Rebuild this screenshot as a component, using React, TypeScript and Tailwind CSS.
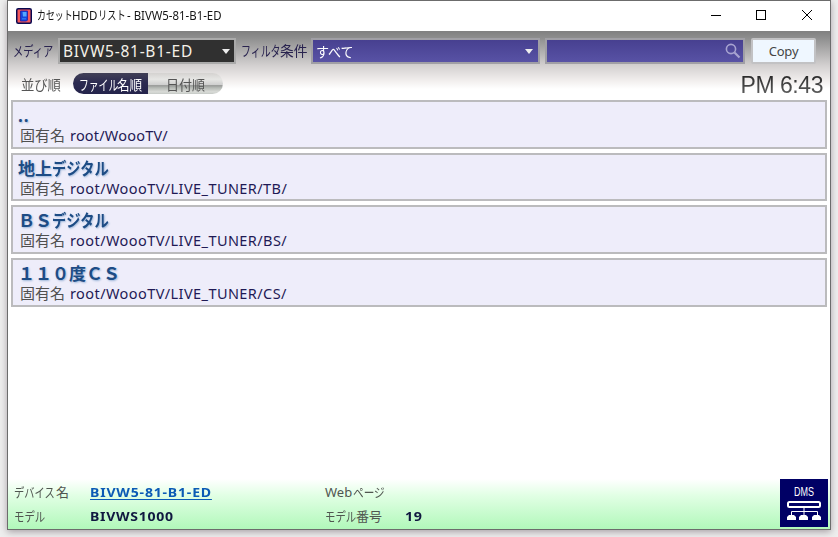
import React from "react";

const JP = "font-['Noto_Sans','Noto_Sans_CJK_JP',sans-serif]";

/* Horizontally scaled run of glyphs, laid out in a box of its final width. */
function Kana({ box, scale, children }: { box: string; scale: string; children: React.ReactNode }) {
  return (
    <span className={`inline-block shrink-0 ${box}`}>
      <span className={`inline-block origin-left whitespace-nowrap ${scale}`}>{children}</span>
    </span>
  );
}

const rows = [
  { head: "..", kana: "", path: "root/WoooTV/", size: "h-[49px]", headStyle: "tracking-[1px]", tracking: "tracking-[0.2px]" },
  { head: "地上", kana: "デジタル", path: "root/WoooTV/LIVE_TUNER/TB/", size: "h-[48px]", headStyle: "", tracking: "tracking-[0.42px]" },
  { head: "ＢＳ", kana: "デジタル", path: "root/WoooTV/LIVE_TUNER/BS/", size: "h-[49px]", headStyle: "", tracking: "tracking-[0.42px]" },
  { head: "１１０度ＣＳ", kana: "", path: "root/WoooTV/LIVE_TUNER/CS/", size: "h-[49px]", headStyle: "", tracking: "tracking-[0.42px]" },
];

function AppIcon() {
  return (
    <svg className="h-4 w-4 shrink-0" viewBox="0 0 16 16">
      <rect x="0.75" y="0.75" width="14.5" height="14.5" rx="1.5" fill="#f4585c" stroke="#080850" strokeWidth="1.5" />
      <path d="M4.500 3h7v9l-1 1h-6z" fill="#1646dc" stroke="#2020a8" strokeWidth="0.8" />
      <path d="M6.500 4h4v4.500H7z" fill="#55a7ff" />
      <path d="M6 10h4v1.5H6z" fill="#2a72f5" />
    </svg>
  );
}

function TitleBar() {
  return (
    <header className="flex h-[30px] shrink-0 items-center bg-white pl-2">
      <AppIcon />
      <div className={`ml-[5px] flex text-[12px] whitespace-nowrap text-[#151515] ${JP}`}>
        <Kana box="w-[35px]" scale="scale-x-[0.74]">カセット</Kana>
        <Kana box="w-[26px]" scale="scale-x-[0.96]">HDD</Kana>
        <Kana box="w-[29px]" scale="scale-x-[0.77]">リスト</Kana>
        <Kana box="w-[100px]" scale="scale-x-[0.95]">- BIVW5-81-B1-ED</Kana>
      </div>
      <svg className="ml-auto mr-[16px] h-3 w-[104px]" viewBox="0 0 104 12" fill="none" stroke="#000" shapeRendering="crispEdges">
        <path d="M1 5.5h10" />
        <rect x="46.5" y="0.5" width="9" height="9" />
        <path d="M92 0l10 10M102 0L92 10" shapeRendering="auto" />
      </svg>
    </header>
  );
}

function Toolbar() {
  return (
    <section className="flex h-[69px] shrink-0 flex-col bg-linear-[180deg,#808080_0px,#8c8c8c_6px,#d2cfcf_34px,#f2efee_50px,#fff_58px]">
      <div className="flex pt-[7px] pl-[5px]">
        <div className={`w-[45px] text-[14px] leading-[26px] text-[#29234f] ${JP}`}>
          <Kana box="w-[41px]" scale="scale-x-[0.73]">メディア</Kana>
        </div>
        <div className="flex h-[26px] w-[178px] items-center justify-between border-2 border-[#aaa] bg-[#303030] pr-[4px] pl-[3px]">
          <span className={`pt-px text-[15.5px] tracking-[0.75px] whitespace-nowrap text-[#f4f0e8] ${JP}`}>BIVW5-81-B1-ED</span>
          <svg className="h-[5px] w-2" viewBox="0 0 8 5"><path d="M0 0h8L4 5z" fill="#eee" /></svg>
        </div>
        <div className={`ml-[5px] flex w-[70px] text-[14px] leading-[26px] whitespace-nowrap text-[#29234f] ${JP}`}>
          <Kana box="w-[39px]" scale="scale-x-[0.71]">フィルタ</Kana>
          <Kana box="w-[28px]" scale="scale-x-[0.98]">条件</Kana>
        </div>
        <div className="flex h-[26px] w-[229px] items-center justify-between border-2 border-[#a09fa5] bg-linear-[180deg,#474090,#5852a5] pr-[5px] pl-[3px]">
          <span className={`text-[14px] text-white ${JP}`}><Kana box="w-[38px]" scale="scale-x-[0.93]">すべて</Kana></span>
          <svg className="h-[5px] w-2" viewBox="0 0 8 5"><path d="M0 0h8L4 5z" fill="#eee" /></svg>
        </div>
        <div className="ml-[5px] flex h-[26px] w-[200px] items-center justify-end border-2 border-[#a09fa5] bg-linear-[180deg,#474090,#5852a5] pr-[2px]">
          <svg className="h-4 w-4" viewBox="0 0 16 16" fill="none" stroke="#a7a3d0">
            <circle cx="6" cy="6" r="4.6" strokeWidth="1.6" />
            <path d="M9.5 9.5l5 5" strokeWidth="2.2" />
          </svg>
        </div>
        <button className={`ml-[6px] h-[26px] w-[65px] rounded-[2px] border-2 border-[#c2c2c4] bg-[#eff7ff] text-[13px] leading-[22px] tracking-[-0.2px] text-[#454545] ${JP}`}>Copy</button>
      </div>
      <div className="flex h-[34px] items-start pt-[9px] pl-[13px]">
        <div className={`w-[52px] text-[14px] leading-[23px] text-[#555] ${JP}`}>
          <Kana box="w-[41px]" scale="scale-x-[0.95]">並び順</Kana>
        </div>
        <div className={`flex h-[21px] w-[150px] overflow-hidden rounded-full text-[14px] leading-[23px] whitespace-nowrap ${JP}`}>
          <div className="flex w-[75px] bg-linear-[180deg,#414056,#2c2b51_45%,#24234b] pl-[6px] text-white">
            <Kana box="w-[38px]" scale="scale-x-[0.7]">ファイル</Kana>
            <Kana box="w-[25px]" scale="scale-x-[0.9]">名順</Kana>
          </div>
          <div className="w-[75px] bg-linear-[180deg,#d4d2d0,#e6e6e4_30%,#d0d0d0_55%,#989a98_60%,#b4b8b4_70%,#dadcd8_90%,#c4c8c4] pl-[18px] text-[#555]">
            <Kana box="w-[39px]" scale="scale-x-[0.93]">日付順</Kana>
          </div>
        </div>
        <span className="mr-[7px] ml-auto bg-linear-[180deg,#222,#666] bg-clip-text font-['Liberation_Sans',sans-serif] text-[23px] leading-[24px] tracking-[-0.45px] whitespace-nowrap text-transparent">PM 6:43</span>
      </div>
    </section>
  );
}

function FileList() {
  return (
    <main className="flex flex-1 flex-col gap-1 pr-[3px] pl-[3px]">
      {rows.map((row) => (
        <article key={row.path} className={`${row.size} ${JP} shrink-0 border-2 border-[#bbbbbd] bg-[#eeedfa] pt-[3px] pl-[5px] whitespace-nowrap`}>
          <h2 className="flex h-[21px] text-[17px] leading-[21px] font-bold text-[#1d4c85] [text-shadow:1px_1px_2px_#9db6d8]">
            <span className={row.headStyle}>{row.head}</span>
            {row.kana && <Kana box="w-[57px]" scale="scale-x-[0.84]">{row.kana}</Kana>}
          </h2>
          <div className="flex pl-[2px] leading-[18px]">
            <span className="w-[50px] text-[15px] text-[#505050]">固有名</span>
            <span className={`text-[14.5px] text-[#1f1a55] ${row.tracking}`}>{row.path}</span>
          </div>
        </article>
      ))}
    </main>
  );
}

function DmsLogo() {
  return (
    <svg className="mt-[-1px] mr-[2px] h-12 w-12" viewBox="0 0 48 48">
      <rect width="48" height="48" fill="#000065" />
      <text x="14" y="16.5" fill="#fff" fontSize="12" fontFamily="Liberation Sans, sans-serif" textLength="20" lengthAdjust="spacingAndGlyphs">DMS</text>
      <rect x="8" y="23" width="32" height="5" rx="1.5" fill="none" stroke="#fff" strokeWidth="2" />
      <path d="M24 28v8M11.500 36v-3.500h26v3.500" fill="none" stroke="#fff" />
      <path d="M7 41v-3l2-2h5l2 2v3zM19 41v-3l2-2h5l2 2v3zM32 41v-3l2-2h5l2 2v3z" fill="#fff" />
    </svg>
  );
}

function Footer() {
  return (
    <footer className={`flex h-[50px] shrink-0 bg-linear-[180deg,#fff_0%,#e2ffe5_32%,#b1f8ba_100%] pt-px pl-[6px] text-[13px] leading-[24px] whitespace-nowrap text-[#505650] ${JP}`}>
      <div className="w-[76px]">
        <div className="flex"><Kana box="w-[42px]" scale="scale-x-[0.79]">デバイス</Kana><span>名</span></div>
        <div className="flex"><Kana box="w-[32px]" scale="scale-x-[0.8]">モデル</Kana></div>
      </div>
      <div className="w-[235px] text-[13px] font-bold">
        <div className="text-[#0b5bb5]"><Kana box="w-[122px]" scale="scale-x-[1.08]"><a className="tracking-[0.75px] underline underline-offset-2">BIVW5-81-B1-ED</a></Kana></div>
        <div className="text-[#101840]"><Kana box="w-[84px]" scale="scale-x-[1.08]"><span className="tracking-[0.65px]">BIVWS1000</span></Kana></div>
      </div>
      <div className="w-[80px]">
        <div className="flex"><span className="w-[28px]">Web</span><Kana box="w-[32px]" scale="scale-x-[0.82]">ページ</Kana></div>
        <div className="flex"><Kana box="w-[31px]" scale="scale-x-[0.8]">モデル</Kana><span>番号</span></div>
      </div>
      <div className="flex-1 pt-6 text-[13px] font-bold tracking-[0.6px] text-[#101840]"><Kana box="w-[20px]" scale="scale-x-[1.1]">19</Kana></div>
      <DmsLogo />
    </footer>
  );
}

export default function App() {
  return (
    <div className="h-[537px] w-[838px] overflow-hidden bg-[#eeeeee] pl-[7px]">
      <div className="flex h-[530px] w-[824px] flex-col border border-[#6c6c6c] bg-white shadow-[0_2px_7px_#a8a0a5]">
        <TitleBar />
        <Toolbar />
        <FileList />
        <Footer />
      </div>
    </div>
  );
}
